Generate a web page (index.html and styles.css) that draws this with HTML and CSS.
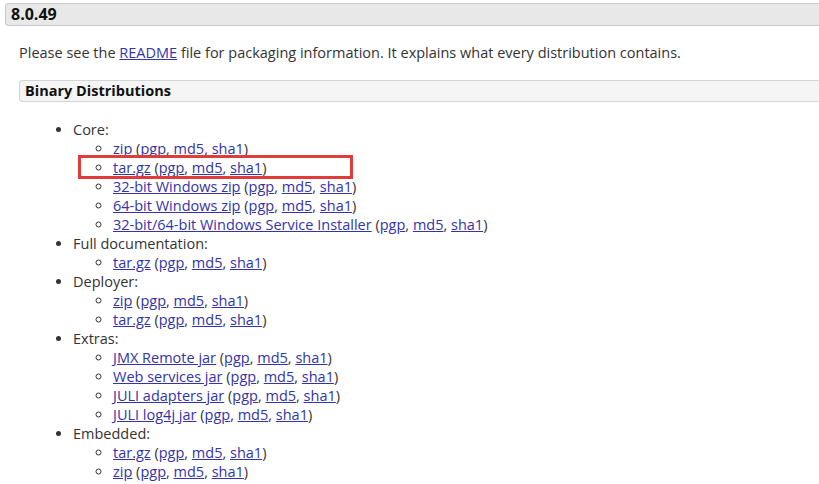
FILE: index.html
```html
<!DOCTYPE html>
<html>
<head>
<meta charset="utf-8">
<link rel="stylesheet" href="styles.css">
</head>
<body>
<div class="page">
  <h3 class="version">8.0.49</h3>
  <div class="section">
    <p class="intro">Please see the <a href="#">README</a> file for packaging information. It explains what every distribution contains.</p>
    <h4 class="sub">Binary Distributions</h4>
    <ul class="dist">
      <li>Core:
        <ul>
          <li><a href="#">zip</a> (<a href="#">pgp</a>, <a href="#">md5</a>, <a href="#">sha1</a>)</li>
          <li class="marked"><a href="#">tar.gz</a> (<a href="#">pgp</a>, <a href="#">md5</a>, <a href="#">sha1</a>)<span class="redbox"></span></li>
          <li><a href="#">32-bit Windows zip</a> (<a href="#">pgp</a>, <a href="#">md5</a>, <a href="#">sha1</a>)</li>
          <li><a href="#">64-bit Windows zip</a> (<a href="#">pgp</a>, <a href="#">md5</a>, <a href="#">sha1</a>)</li>
          <li><a href="#">32-bit/64-bit Windows Service Installer</a> (<a href="#">pgp</a>, <a href="#">md5</a>, <a href="#">sha1</a>)</li>
        </ul>
      </li>
      <li>Full documentation:
        <ul>
          <li><a href="#">tar.gz</a> (<a href="#">pgp</a>, <a href="#">md5</a>, <a href="#">sha1</a>)</li>
        </ul>
      </li>
      <li>Deployer:
        <ul>
          <li><a href="#">zip</a> (<a href="#">pgp</a>, <a href="#">md5</a>, <a href="#">sha1</a>)</li>
          <li><a href="#">tar.gz</a> (<a href="#">pgp</a>, <a href="#">md5</a>, <a href="#">sha1</a>)</li>
        </ul>
      </li>
      <li>Extras:
        <ul>
          <li><a href="#">JMX Remote jar</a> (<a href="#">pgp</a>, <a href="#">md5</a>, <a href="#">sha1</a>)</li>
          <li><a href="#">Web services jar</a> (<a href="#">pgp</a>, <a href="#">md5</a>, <a href="#">sha1</a>)</li>
          <li><a href="#">JULI adapters jar</a> (<a href="#">pgp</a>, <a href="#">md5</a>, <a href="#">sha1</a>)</li>
          <li><a href="#">JULI log4j jar</a> (<a href="#">pgp</a>, <a href="#">md5</a>, <a href="#">sha1</a>)</li>
        </ul>
      </li>
      <li>Embedded:
        <ul>
          <li><a href="#">tar.gz</a> (<a href="#">pgp</a>, <a href="#">md5</a>, <a href="#">sha1</a>)</li>
          <li><a href="#">zip</a> (<a href="#">pgp</a>, <a href="#">md5</a>, <a href="#">sha1</a>)</li>
        </ul>
      </li>
    </ul>
  </div>
</div>
</body>
</html>
```
FILE: styles.css
```css
html, body {
  margin: 0;
  padding: 0;
  background: #fff;
}
body {
  font-family: "Open Sans", "Liberation Sans", sans-serif;
  font-size: 14.5px;
  line-height: 19px;
  color: #333;
  overflow: hidden;
}
.page {
  padding-top: 3px;
  padding-left: 5px;
}
.version {
  margin: 0;
  height: 21px;
  line-height: 21px;
  padding-left: 5px;
  font-size: 16px;
  font-weight: bold;
  color: #111;
  background: #e8e8e8;
  border: 1px solid #c8c8c8;
  border-right: none;
  border-radius: 4px 0 0 4px;
}
.section {
  padding-left: 14px;
}
.intro {
  margin: 17px 0 0 0;
  line-height: 19px;
}
a {
  color: #3333aa;
  text-decoration: underline;
}
.sub {
  margin: 18px 0 0 0;
  height: 20px;
  line-height: 20px;
  padding-left: 5px;
  font-size: 14.5px;
  font-weight: bold;
  color: #111;
  background: #f5f5f5;
  border: 1px solid #d4d4d4;
  border-right: none;
  border-radius: 4px 0 0 4px;
}
.dist {
  margin: 18px 0 0 0;
  padding-left: 54px;
  list-style: disc;
}
.dist li {
  line-height: 19px;
}
.dist ul {
  margin: 0;
  padding-left: 40px;
  list-style: circle;
}
.marked {
  position: relative;
}
.redbox {
  position: absolute;
  left: -35px;
  top: -3px;
  width: 269px;
  height: 18px;
  border: 3px solid #e03c3c;
  pointer-events: none;
}
```
